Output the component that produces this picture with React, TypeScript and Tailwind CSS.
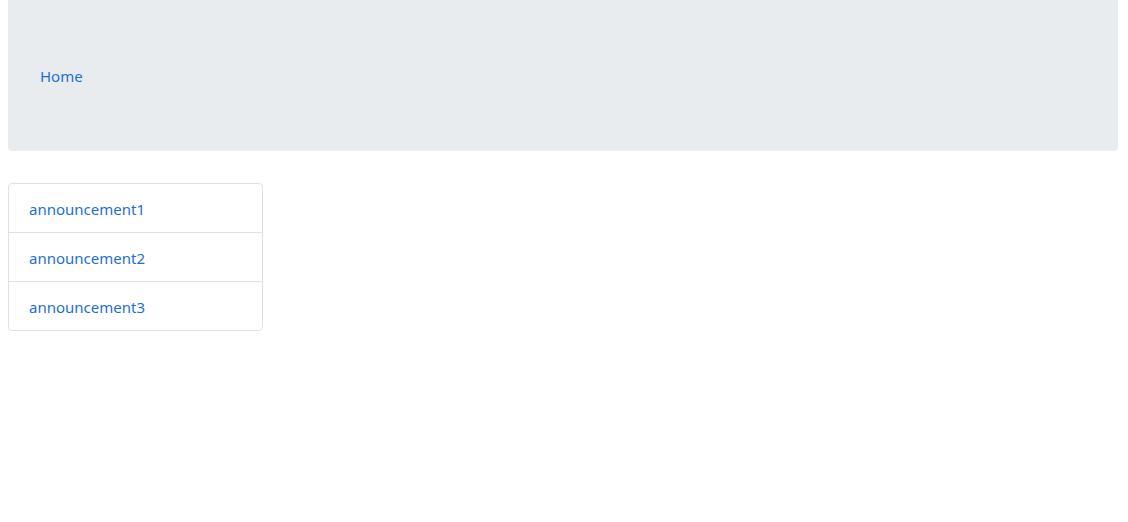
export default function App() {
  const items = ["announcement1", "announcement2", "announcement3"];
  return (
    <div
      className="min-h-screen bg-white pl-2 pr-[10px]"
      style={{ fontFamily: '"Noto Sans", "Open Sans", sans-serif' }}
    >
      <header className="flex h-[151px] items-center rounded-b-[4px] bg-[#e9ecef] px-8 pt-[2px]">
        <a href="#" className="text-[15px] text-[#1d70d4]">
          Home
        </a>
      </header>

      <ul className="mt-[32px] w-[255px] rounded-[4px] border border-[#dee2e6]">
        {items.map((item) => (
          <li
            key={item}
            className="flex h-[49px] items-center border-b border-[#dee2e6] px-5 pt-[3px] last:h-[48px] last:border-b-0"
          >
            <a href="#" className="text-[15px] text-[#1d70d4]">
              {item}
            </a>
          </li>
        ))}
      </ul>
    </div>
  );
}
